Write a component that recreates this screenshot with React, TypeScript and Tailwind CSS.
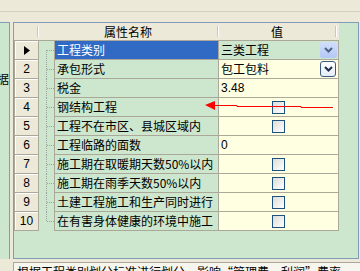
import React from "react"

const rows = [
  { name: "工程类别", value: "三类工程", kind: "combo-hot" },
  { name: "承包形式", value: "包工包料", kind: "combo" },
  { name: "税金", value: "3.48", kind: "text" },
  { name: "钢结构工程", value: "", kind: "check" },
  { name: "工程不在市区、县城区域内", value: "", kind: "check" },
  { name: "工程临路的面数", value: "0", kind: "text" },
  { name: "施工期在取暖期天数50%以内", value: "", kind: "check" },
  { name: "施工期在雨季天数50%以内", value: "", kind: "check" },
  { name: "土建工程施工和生产同时进行", value: "", kind: "check" },
  { name: "在有害身体健康的环境中施工", value: "", kind: "check" },
]

const Chevron = ({ color }: { color: string }) => (
  <svg width="9" height="6" viewBox="0 0 9 6">
    <path d="M1 1 L4.5 4.5 L8 1" fill="none" stroke={color} strokeWidth="2" />
  </svg>
)

const TreeLines = ({ first, last }: { first: boolean; last: boolean }) => (
  <svg width="15" height="19" viewBox="0 0 15 19" className="block">
    <line x1="7.5" y1={first ? 9 : 0} x2="7.5" y2={last ? 10 : 19} stroke="#a0a0a0" strokeDasharray="1 1" />
    <line x1="8" y1="9.5" x2="15" y2="9.5" stroke="#a0a0a0" strokeDasharray="1 1" />
  </svg>
)

const Checkbox = () => (
  <div className="w-[13px] h-[13px] border border-[#1c5180] bg-gradient-to-br from-[#dcdcd7] to-white" />
)

const HeaderSep = () => (
  <div className="w-[2px] h-[11px] border-l border-[#cbc7b8] border-r border-r-white" />
)

export default function App() {
  return (
    <div className="w-[360px] h-[271px] overflow-hidden bg-[#ece9d8] text-[12px] text-black font-['Noto_Sans_CJK_SC',sans-serif] leading-none">
      {/* top strip */}
      <div className="h-[11px]" />
      <div className="h-px bg-[#d4d0c0]" />
      <div className="h-[10px]" />

      <div className="flex h-[237px]">
        {/* left panel */}
        <div className="w-[10px] bg-[#cde7ce] border-t border-r border-[#7f9db9] overflow-hidden">
          <div className="mt-[50px] flex justify-end whitespace-nowrap">数据</div>
        </div>
        <div className="w-[3px]" />

        {/* property grid */}
        <div className="relative w-[346px] border border-[#7f9db9] bg-[#cde7ce]">
          <div className="flex items-center w-[325px] h-[18px] bg-[#ece9d8] border-b border-[#aca899]">
            <div className="w-[23px]" />
            <HeaderSep />
            <div className="w-[178px] text-center pt-px">属性名称</div>
            <HeaderSep />
            <div className="w-[116px] text-center pt-px">值</div>
            <HeaderSep />
          </div>

          {rows.map((r, i) => (
            <div key={i} className="flex h-[19px]">
              <div className="w-[25px] h-[19px] border-l border-r border-b border-[#aca899] bg-[#ece9d8] flex items-center justify-center shadow-[inset_1px_1px_0_#fff]">
                {i === 0 ? (
                  <svg width="6" height="9" viewBox="0 0 6 9">
                    <path d="M0 0 L6 4.5 L0 9 Z" fill="#000" />
                  </svg>
                ) : (
                  <span className="font-['Liberation_Sans',sans-serif] text-[12px]">{i + 1}</span>
                )}
              </div>
              <div className="w-[16px] h-[19px] border-r border-[#aca899]">
                <TreeLines first={i === 0} last={i === rows.length - 1} />
              </div>
              <div
                className={`w-[164px] h-[19px] border-r border-b border-[#aca899] pl-[2px] flex items-center whitespace-nowrap overflow-hidden ${
                  i === 0 ? "bg-[#316ac5] text-white" : ""
                }`}
              >
                {r.name}
              </div>
              <div
                className={`w-[120px] h-[19px] border-r border-b border-[#aca899] flex items-center ${
                  i === 0 ? "" : "bg-[#ffffe1]"
                }`}
              >
                {r.kind === "check" && (
                  <div className="w-full flex justify-center">
                    <Checkbox />
                  </div>
                )}
                {r.kind === "text" && <span className="pl-[2px] font-['Liberation_Sans',sans-serif]">{r.value}</span>}
                {r.kind === "combo-hot" && (
                  <div className="w-full flex items-center justify-between pl-[2px] pr-px">
                    <span>{r.value}</span>
                    <div className="w-[17px] h-[16px] rounded-[2px] bg-gradient-to-b from-[#d2defb] to-[#b4c8f6] flex items-center justify-center">
                      <Chevron color="#4d6185" />
                    </div>
                  </div>
                )}
                {r.kind === "combo" && (
                  <div className="w-full flex items-center justify-between pl-[2px] pr-[2px]">
                    <span>{r.value}</span>
                    <div className="w-[16px] h-[16px] rounded-[3px] border border-[#3c5a83] bg-gradient-to-b from-white to-[#e6ecf8] flex items-center justify-center">
                      <Chevron color="#1f2f4d" />
                    </div>
                  </div>
                )}
              </div>
            </div>
          ))}

          {/* red annotation arrow */}
          <svg className="absolute left-[190px] top-[77px]" width="130" height="12" viewBox="0 0 130 12">
            <polygon points="1,5 11,1 11,10" fill="#ff0000" />
            <polyline points="11,5.5 33,5.5 33,6.5 97,6.5 97,7.5 129,7.5" fill="none" stroke="#ff0000" strokeWidth="1" />
          </svg>
        </div>
      </div>

      <div className="h-[3px]" />
      <div className="ml-[13px] h-[20px] border-t border-l border-[#aca899] bg-[#f7f6ee] pl-[3px] pt-[3px] whitespace-nowrap">
        根据工程类别划分标准进行划分，影响“管理费、利润”费率
      </div>
    </div>
  )
}
